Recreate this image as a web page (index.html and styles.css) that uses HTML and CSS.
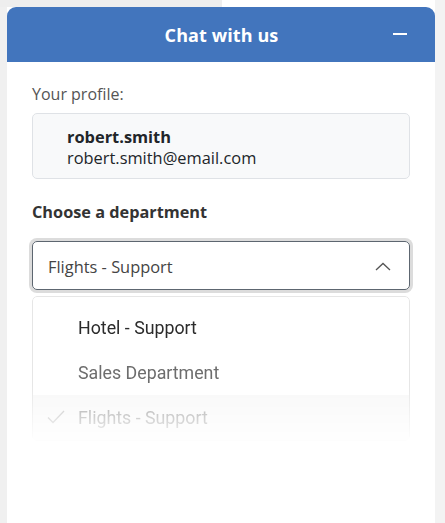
FILE: index.html
```html
<!DOCTYPE html>
<html>
<head>
<meta charset="utf-8">
<link rel="stylesheet" href="styles.css">
</head>
<body>
<div class="backdrop">
  <div class="strip"></div>
  <div class="panel">
    <div class="header">
      <span class="title">Chat with us</span>
      <span class="minimize"></span>
    </div>
    <div class="body">
      <div class="label">Your profile:</div>
      <div class="profile">
        <div class="name">robert.smith</div>
        <div class="email">robert.smith@email.com</div>
      </div>
      <div class="dept-label">Choose a department</div>
      <div class="select">
        <span class="value">Flights - Support</span>
        <svg class="chevron" width="16" height="9" viewBox="0 0 16 9"><path d="M1 8 L8 1.5 L15 8" fill="none" stroke="#555" stroke-width="1.3"/></svg>
      </div>
      <div class="menu">
        <div class="option o1">Hotel - Support</div>
        <div class="option o2">Sales Department</div>
        <div class="option o3 selected">
          <svg class="check" width="18" height="14" viewBox="0 0 18 14"><path d="M1 7.5 L6 12.5 L17 1" fill="none" stroke="#bbb" stroke-width="1.3"/></svg>
          Flights - Support
        </div>
      </div>
    </div>
  </div>
</div>
</body>
</html>
```
FILE: styles.css
```css
html, body {
  margin: 0;
  padding: 0;
  background: #ffffff;
  width: 445px;
  height: 523px;
  overflow: hidden;
}
.backdrop {
  position: relative;
  width: 445px;
  height: 523px;
  background: linear-gradient(to right, #f0f0f0 0, #f0f0f0 7px, #ffffff 7px, #ffffff 435px, #f3f3f3 435px);
  padding-top: 7px;
  box-sizing: border-box;
}
.strip {
  position: absolute;
  left: 0;
  top: 0;
  width: 222px;
  height: 7px;
  background: #eeeeee;
}
.panel {
  margin-left: 7px;
  width: 428px;
  height: 516px;
  background: #fff;
  border-radius: 9px 9px 0 0;
  overflow: hidden;
  font-family: "Open Sans", "Noto Sans", sans-serif;
}
.header {
  height: 55px;
  background: #4275bd;
  display: flex;
  align-items: center;
  justify-content: center;
  position: relative;
}
.title {
  color: #fff;
  font-weight: 700;
  font-size: 18px;
  letter-spacing: 0.1px;
  margin-left: 1px;
}
.minimize {
  position: absolute;
  right: 28px;
  top: 26px;
  width: 14px;
  height: 2px;
  background: #fff;
}
.body {
  padding: 20px 25px 0 25px;
}
.label {
  font-size: 16px;
  color: #555;
  line-height: 24px;
}
.profile {
  margin-top: 7px;
  height: 66px;
  box-sizing: border-box;
  border: 1px solid #dfe2e6;
  border-radius: 5px;
  background: #f8f9fa;
  padding: 12px 0 0 34px;
  color: #212529;
  font-size: 16.4px;
  line-height: 21px;
}
.name {
  font-weight: 700;
}
.dept-label {
  margin-top: 21px;
  font-size: 16.3px;
  font-weight: 700;
  color: #333;
  line-height: 24px;
}
.select {
  margin-top: 17px;
  height: 49px;
  box-sizing: border-box;
  border: 1px solid #5d6670;
  border-radius: 5px;
  box-shadow: 0 0 0 3px #dcdcdc;
  display: flex;
  align-items: center;
  justify-content: space-between;
  padding: 0 18px 0 15px;
  font-size: 16.4px;
  color: #444;
}
.value {
  margin-top: 1px;
}
.chevron {
  margin-top: 1px;
}
.menu {
  margin-top: 6px;
  border: 1px solid #e6e6e6;
  border-radius: 5px;
  padding-top: 8px;
  font-family: Roboto, "Liberation Sans", sans-serif;
  font-size: 17.8px;
  box-shadow: 0 4px 24px rgba(0,0,0,0.06);
  -webkit-mask-image: linear-gradient(to bottom, #000 0, #000 90px, rgba(0,0,0,0.06) 145px);
  mask-image: linear-gradient(to bottom, #000 0, #000 90px, rgba(0,0,0,0.06) 145px);
}
.option {
  height: 45px;
  display: flex;
  align-items: center;
  padding-left: 45px;
  position: relative;
}
.o1 { color: #2b2b2b; }
.o2 { color: #6d6d6d; }
.o3 { color: #999; background: #f8f8f8; }
.check {
  position: absolute;
  left: 14px;
  top: 15px;
}
```
